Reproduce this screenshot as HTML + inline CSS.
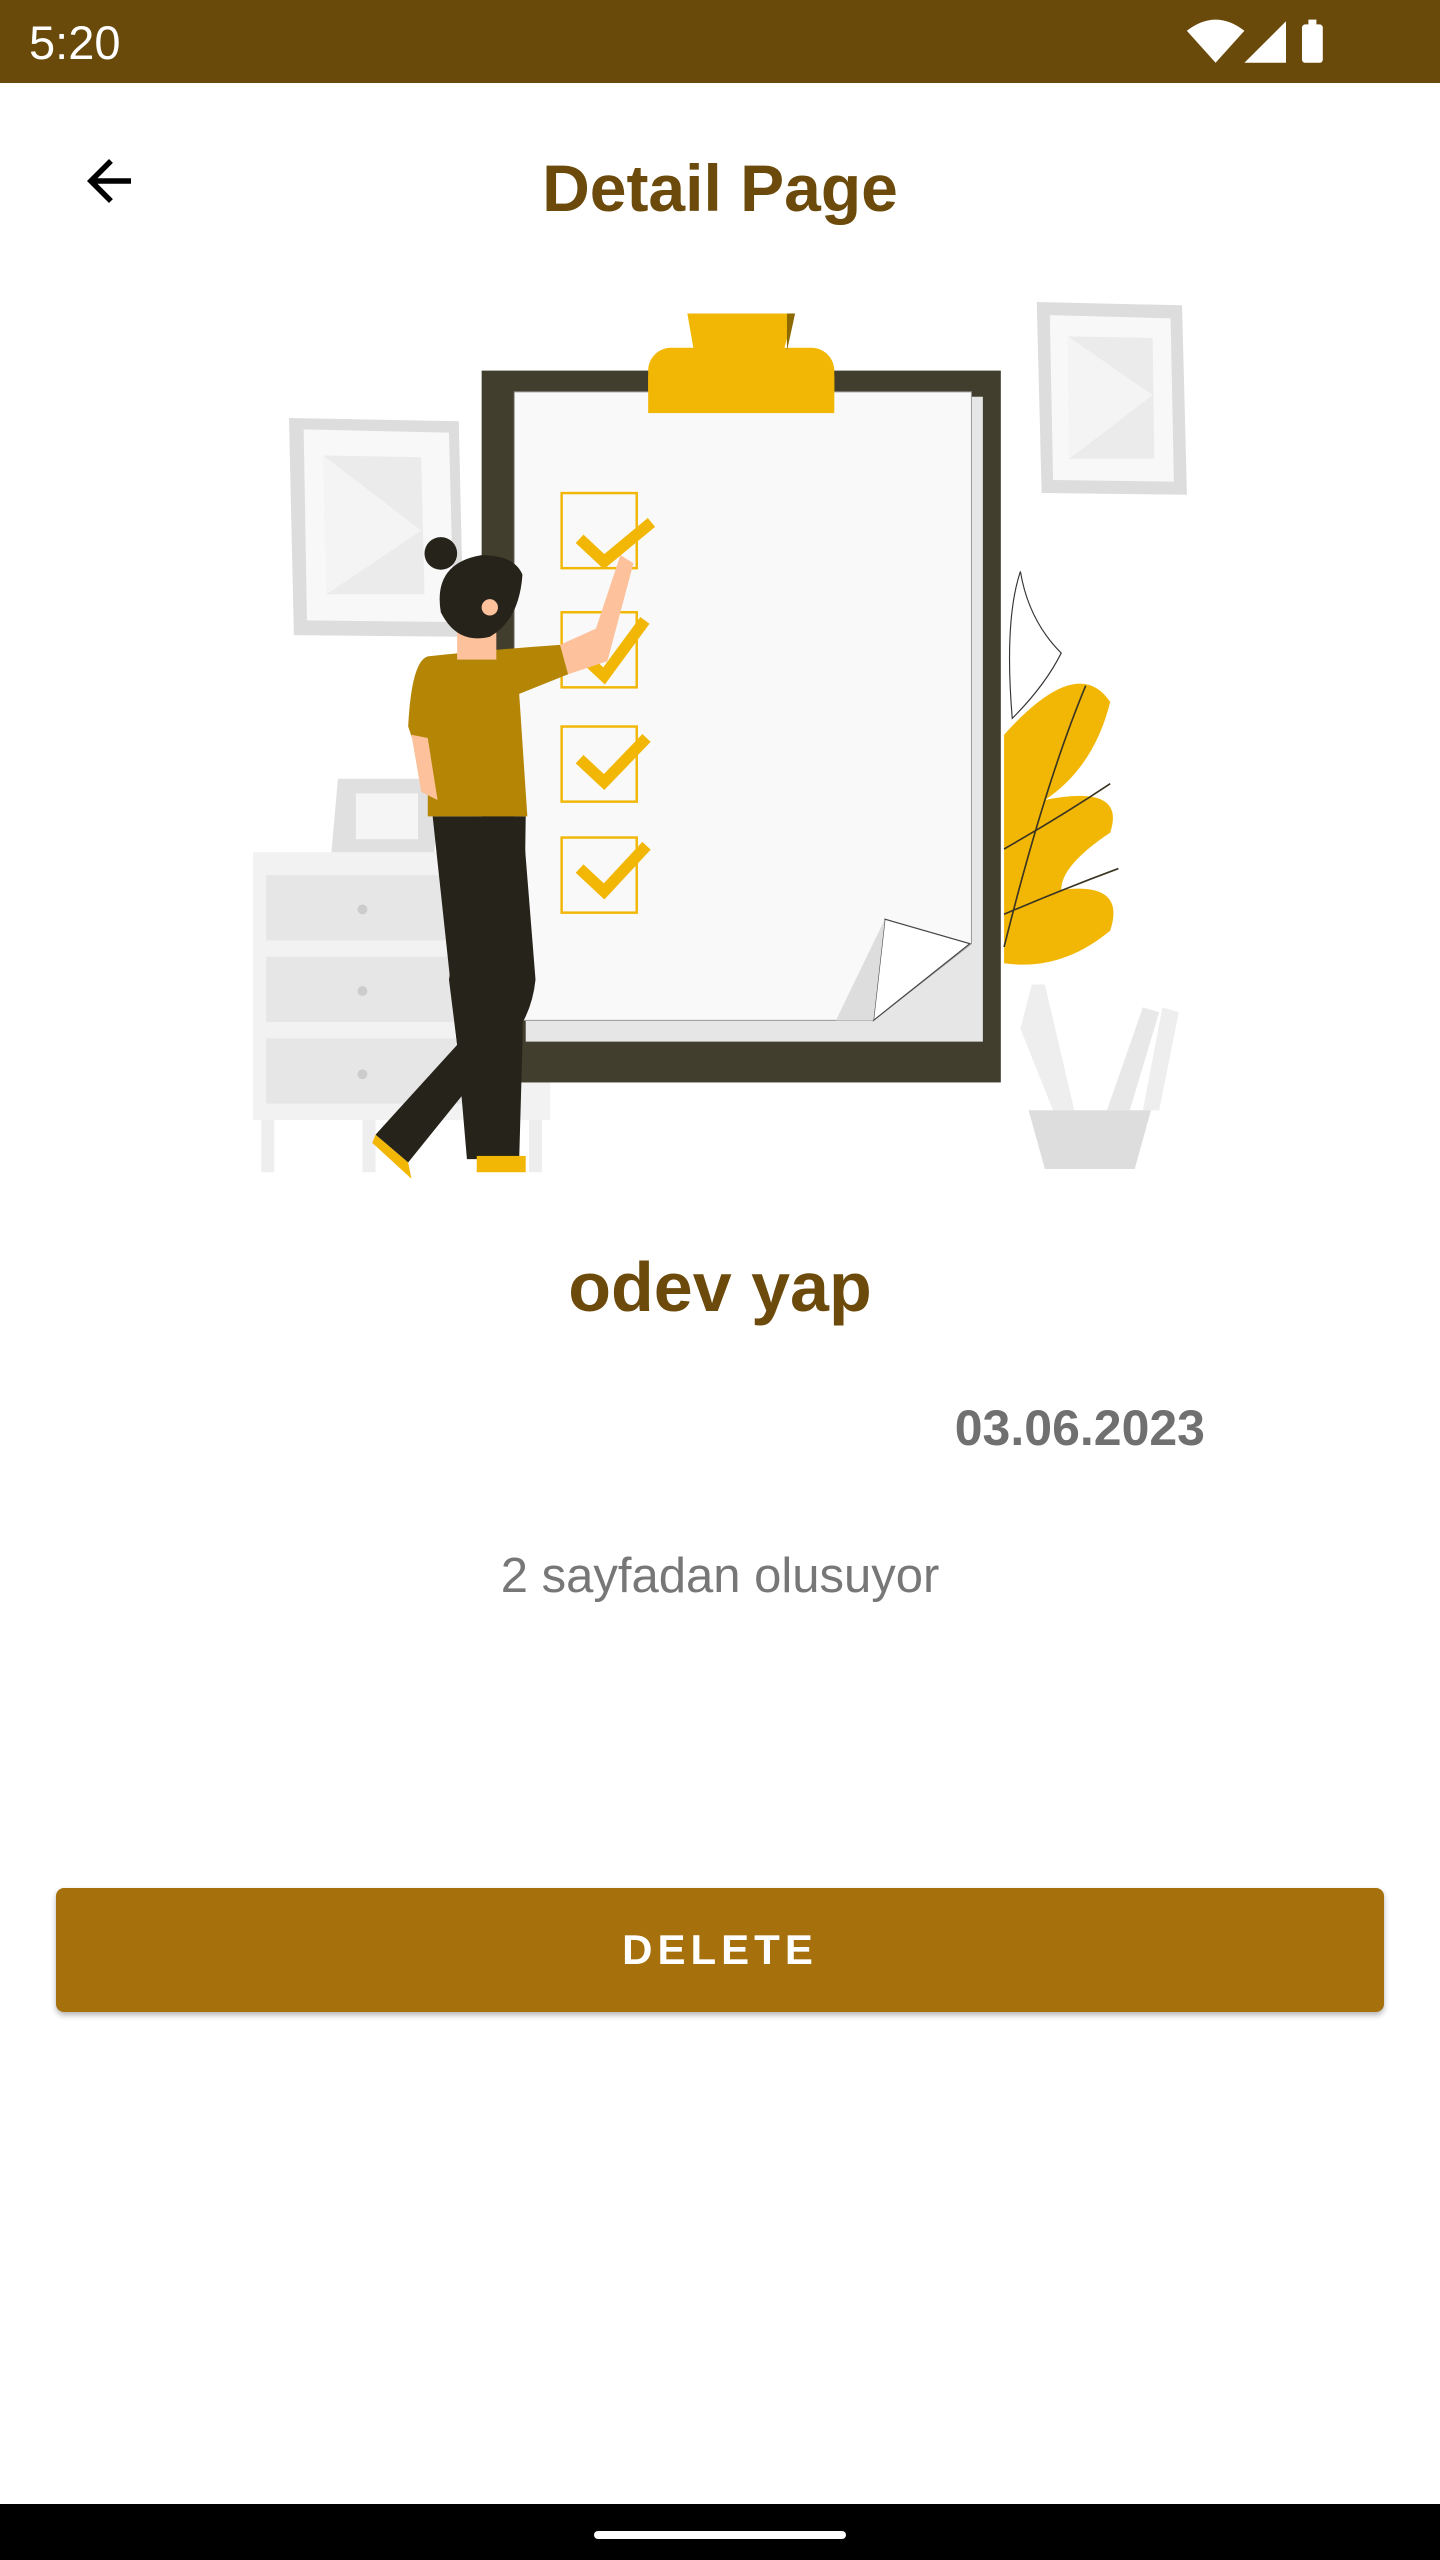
<!DOCTYPE html>
<html><head><meta charset="utf-8"><style>
*{margin:0;padding:0;box-sizing:border-box}
body{width:1440px;height:2560px;background:#fff;position:relative;overflow:hidden;font-family:"Liberation Sans",Roboto,sans-serif}
.sb{position:absolute;left:0;top:0;width:1440px;height:83px;background:#694a0a}
.t{position:absolute;color:#fff;font-size:47px;left:29px;top:15px}
.title{position:absolute;left:0;width:1440px;text-align:center;top:150px;font-size:66px;font-weight:bold;color:#6b4a0b}
.name{position:absolute;left:0;width:1440px;text-align:center;top:1247px;font-size:70px;font-weight:bold;color:#6b4a0b}
.date{position:absolute;right:235px;top:1399px;font-size:50px;font-weight:bold;color:#707070}
.desc{position:absolute;left:0;width:1440px;text-align:center;top:1548px;font-size:49px;color:#777}
.btn{position:absolute;left:56px;top:1888px;width:1328px;height:124px;background:#a6700c;border-radius:8px;box-shadow:0 3px 6px rgba(0,0,0,.3);color:#fff;font-size:42px;font-weight:bold;letter-spacing:5px;text-align:center;line-height:124px}
.nav{position:absolute;left:0;top:2504px;width:1440px;height:56px;background:#000}
.h{position:absolute;left:594px;top:2531px;width:252px;height:8px;border-radius:4px;background:#fff}
</style></head><body>
<div class="sb"><div class="t">5:20</div>
<svg style="position:absolute;left:1185px;top:18px" width="170" height="48" viewBox="0 0 104 30"><path d="M0 8 Q18 -6 36 8 L18 28Z" fill="#fff"/><path d="M62 28 L62 2 L36 28Z" fill="#fff"/><rect x="72" y="4" width="13" height="24" rx="2" fill="#fff"/><rect x="76" y="1" width="5" height="4" fill="#fff"/></svg></div>
<svg style="position:absolute;left:76px;top:148px" width="66" height="66" viewBox="0 0 24 24"><path d="M20 11H7.83l5.59-5.59L12 4l-8 8 8 8 1.41-1.41L7.83 13H20z" fill="#000"/></svg>
<div class="title">Detail Page</div>
<svg style="position:absolute;left:0;top:0" width="1440" height="2560" viewBox="0 0 882 1568">
<polygon points="177,256 281,258 284,390 180,389" fill="#ddd"/>
<polygon points="186,263 275,265 278,381 188,380" fill="#f8f8f8"/>
<polygon points="198,279 258,280 260,364 200,364" fill="#ebebeb"/>
<polygon points="198,279 258,325 200,364" fill="#f4f4f4"/>
<polygon points="635,185 724,187 727,303 638,302" fill="#ddd"/>
<polygon points="643,193 717,195 719,295 645,294" fill="#f8f8f8"/>
<polygon points="654,206 706,207 707,281 655,281" fill="#ebebeb"/>
<polygon points="654,206 706,242 655,281" fill="#f4f4f4"/>
<rect x="155" y="522" width="182" height="164" fill="#f2f2f2"/>
<rect x="163" y="536" width="120" height="40" fill="#e6e6e6"/><rect x="163" y="586" width="120" height="40" fill="#e6e6e6"/><rect x="163" y="636" width="120" height="40" fill="#e6e6e6"/>
<circle cx="222" cy="557" r="3" fill="#ccc"/><circle cx="222" cy="607" r="3" fill="#ccc"/><circle cx="222" cy="658" r="3" fill="#ccc"/>
<rect x="160" y="686" width="8" height="32" fill="#eee"/><rect x="222" y="686" width="8" height="32" fill="#eee"/><rect x="324" y="686" width="8" height="32" fill="#eee"/>
<polygon points="207,477 270,477 266,522 203,522" fill="#e0e0e0"/><rect x="218" y="486" width="38" height="28" fill="#f5f5f5"/>
<path d="M615 450 Q660 400 680 430 Q670 470 640 490 Q690 480 680 510 Q650 530 650 545 Q690 540 680 570 Q650 595 615 590Z" fill="#f2b705"/>
<path d="M615 580 Q640 480 665 420 M615 520 Q650 500 680 480 M615 560 Q650 545 685 532" stroke="#3a3422" stroke-width="1" fill="none"/>
<path d="M625 350 Q615 380 620 440 Q640 420 650 400 Q630 380 625 350Z" fill="#fff" stroke="#333" stroke-width="0.7"/>
<polygon points="625,630 632,603 640,603 658,680 645,680" fill="#eee"/>
<polygon points="678,680 700,617 710,620 692,680" fill="#e8e8e8"/>
<polygon points="700,680 712,617 722,620 710,680" fill="#eee"/>
<polygon points="630,680 705,680 695,716 640,716" fill="#ddd"/>
<rect x="295" y="227" width="318" height="436" fill="#423e2d"/>
<rect x="322" y="243" width="280" height="395" fill="#e6e6e6"/>
<polygon points="315,240 595,240 595,578 535,625 315,625" fill="#f9f9f9" stroke="#999" stroke-width="0.6"/>
<polygon points="542,563 594,578 535,625" fill="#fff" stroke="#444" stroke-width="0.7"/>
<polygon points="542,563 535,625 512,625" fill="#ddd"/>
<rect x="397" y="213" width="114" height="40" rx="14" fill="#f2b705"/><rect x="397" y="230" width="114" height="23" fill="#f2b705"/>
<polygon points="421,192 486,192 480,215 425,215" fill="#f2b705"/><polygon points="482,192 487,192 482,215" fill="#8c6a00"/>
<g fill="none" stroke="#f2b705" stroke-width="1.5">
<rect x="344" y="302" width="46" height="46"/><rect x="344" y="375" width="46" height="46"/><rect x="344" y="445" width="46" height="46"/><rect x="344" y="513" width="46" height="46"/></g>
<g fill="none" stroke="#f2b705" stroke-width="7">
<path d="M355 330 L370 344 L399 320"/><path d="M355 400 L370 414 L395 380"/><path d="M355 465 L370 479 L396 452"/><path d="M355 532 L370 546 L396 518"/></g>
<path d="M290 500 L320 500 L328 600 Q325 630 300 650 L250 712 L230 695 L280 640 L275 600Z" fill="#26231a"/>
<path d="M265 500 L322 500 L320 640 L318 710 L286 710 L280 640 Z" fill="#26231a"/>
<polygon points="230,695 250,712 252,722 228,700" fill="#f2b705"/><rect x="292" y="708" width="30" height="10" fill="#f2b705"/>
<path d="M343 395 L365 385 L380 340 L388 345 L372 405 L348 413Z" fill="#fdc19c"/>
<path d="M262 402 Q300 398 343 395 L348 413 L318 425 L323 500 L262 500 L262 480 L250 445 Q252 405 262 402Z" fill="#b58606"/>
<path d="M252 450 L262 452 L268 490 L258 485Z" fill="#fdc19c"/>
<rect x="280" y="370" width="24" height="34" fill="#fdc19c"/>
<circle cx="270" cy="339" r="10" fill="#26231a"/>
<path d="M270 375 Q265 345 295 340 Q315 340 320 352 Q318 380 300 390 Q280 395 270 375Z" fill="#26231a"/>
<circle cx="300" cy="372" r="5" fill="#fdc19c"/>
</svg>
<div class="name">odev yap</div>
<div class="date">03.06.2023</div>
<div class="desc">2 sayfadan olusuyor</div>
<div class="btn">DELETE</div>
<div class="nav"></div><div class="h"></div>
</body></html>
